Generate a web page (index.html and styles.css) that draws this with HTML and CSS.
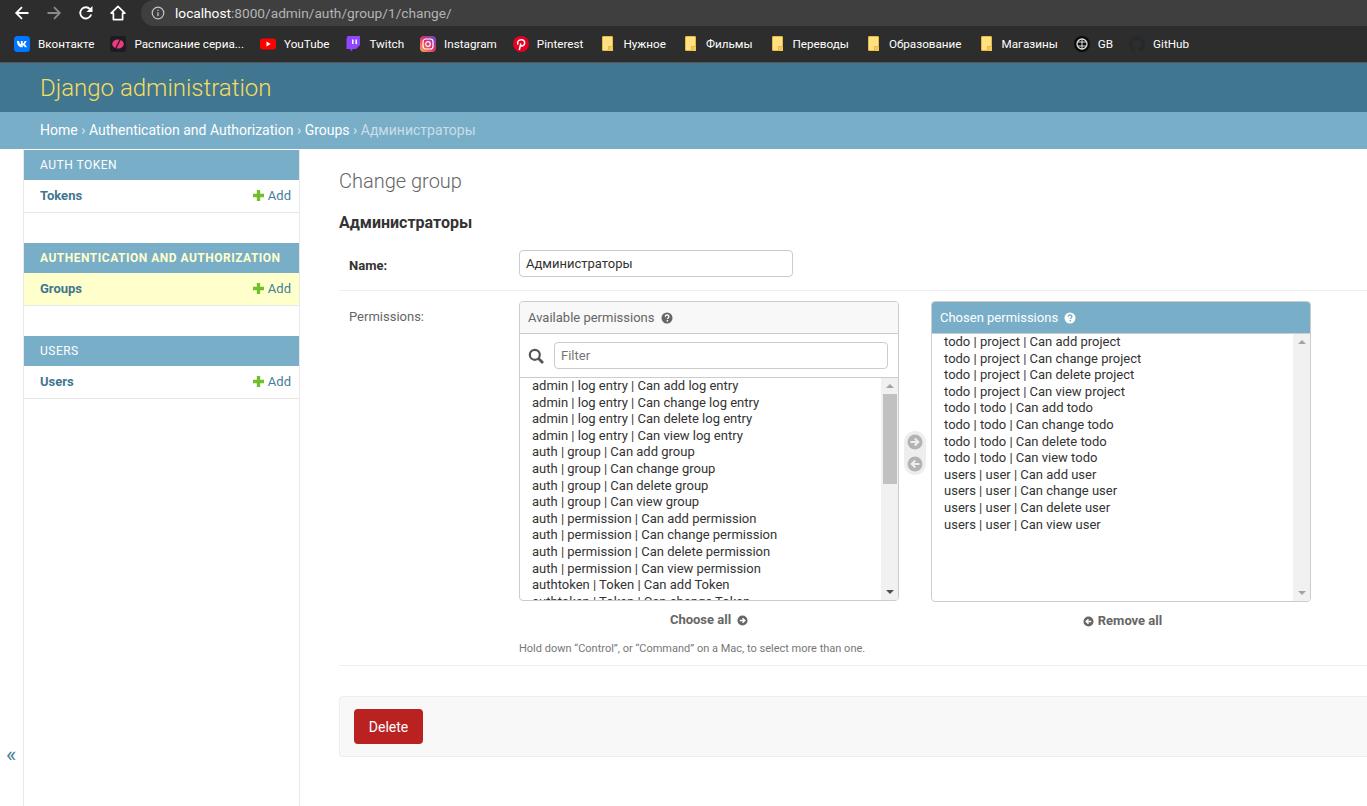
FILE: index.html
```html
<!DOCTYPE html>
<html lang="en">
<head>
    <meta charset="UTF-8">
    <title>Change group | Django site admin</title>
    <link rel="stylesheet" href="styles.css">
</head>
<body>
    <!-- browser chrome -->
    <div class="toolbar">
        <div class="nav-buttons">
            <svg class="nav-icon" viewBox="0 0 16 16"><path d="M14.5 8H2.5M8 2.2 2.2 8 8 13.8" fill="none" stroke="#fff" stroke-width="1.8"/></svg>
            <svg class="nav-icon" viewBox="0 0 16 16"><path d="M1.5 8H13.5M8 2.2 13.8 8 8 13.8" fill="none" stroke="#8a8a8a" stroke-width="1.8"/></svg>
            <svg class="nav-icon" viewBox="0 0 16 16"><path d="M13.2 9.5A5.6 5.6 0 1 1 12 4.1" fill="none" stroke="#fff" stroke-width="1.8"/><path d="M14.5 1v6h-6z" fill="#fff"/></svg>
            <svg class="nav-icon" viewBox="0 0 16 16"><path d="M8 1.4 1.2 8.2H3.4V14.6H12.6V8.2H14.8Z" fill="none" stroke="#fff" stroke-width="1.7" stroke-linejoin="round"/></svg>
        </div>
        <div class="address-bar">
            <svg class="info-icon" viewBox="0 0 16 16"><circle cx="8" cy="8" r="6.6" fill="none" stroke="#c4c4c4" stroke-width="1.4"/><path d="M8 7v4.5M8 4.2v1.6" stroke="#c4c4c4" stroke-width="1.5"/></svg>
            <span class="url"><span class="url-host">localhost</span>:8000/admin/auth/group/1/change/</span>
        </div>
    </div>
    <div class="bookmarks">
        <a class="bookmark">
            <svg class="bm-icon" viewBox="0 0 16 16"><rect width="16" height="16" rx="3.5" fill="#0077ff"/><path d="M3 5h2c.2 2 1 3 1.8 3.2V5h1.9v2.6c.8-.1 1.6-1 1.9-2.6h1.9c-.3 1.6-1.2 2.8-2 3.3.8.5 1.9 1.3 2.4 3h-2c-.4-1.1-1.2-1.9-2.2-2v2H8C5 11.300 3.200 9 3 5z" fill="#fff"/></svg>
            Вконтакте
        </a>
        <a class="bookmark">
            <svg class="bm-icon" viewBox="0 0 16 16"><rect width="16" height="16" rx="3" fill="#1c1c22"/><ellipse cx="8" cy="8" rx="5.800" ry="4.600" fill="#ec3a82"/><path d="M5.500 13 10.500 3" stroke="#1c1c22" stroke-width="1.300"/></svg>
            Расписание сериа...
        </a>
        <a class="bookmark">
            <svg class="bm-icon" viewBox="0 0 16 16"><rect y="2.500" width="16" height="11" rx="3" fill="#f00"/><path d="M6.500 5.600 10.700 8 6.500 10.400z" fill="#fff"/></svg>
            YouTube
        </a>
        <a class="bookmark">
            <svg class="bm-icon" viewBox="0 0 16 16"><path d="M2.500 0H15V9L11 13H8L5.500 15.500V13H1.500V3z" fill="#9146ff"/><path d="M7 3.500H8.500V8H7zM10.500 3.500H12V8H10.500z" fill="#fff"/></svg>
            Twitch
        </a>
        <a class="bookmark">
            <svg class="bm-icon" viewBox="0 0 16 16"><defs><linearGradient id="ig" x1="0" y1="1" x2="1" y2="0"><stop offset="0" stop-color="#fdb44b"/><stop offset=".5" stop-color="#e1306c"/><stop offset="1" stop-color="#5b51d8"/></linearGradient></defs><rect width="16" height="16" rx="4" fill="url(#ig)"/><rect x="3" y="3" width="10" height="10" rx="2.800" fill="none" stroke="#fff" stroke-width="1.200"/><circle cx="8" cy="8" r="2.300" fill="none" stroke="#fff" stroke-width="1.200"/></svg>
            Instagram
        </a>
        <a class="bookmark">
            <svg class="bm-icon" viewBox="0 0 16 16"><circle cx="8" cy="8" r="8" fill="#e60023"/><path d="M6.300 14 7.800 7.500M5 8.600C3.800 6 5.500 3.700 8.200 3.700c2.500 0 3.800 1.700 3.400 3.800-.4 2-2.800 3.300-4.300 1.700" fill="none" stroke="#fff" stroke-width="1.500"/></svg>
            Pinterest
        </a>
        <a class="bookmark"><span class="folder"></span>Нужное</a>
        <a class="bookmark"><span class="folder"></span>Фильмы</a>
        <a class="bookmark"><span class="folder"></span>Переводы</a>
        <a class="bookmark"><span class="folder"></span>Образование</a>
        <a class="bookmark"><span class="folder"></span>Магазины</a>
        <a class="bookmark">
            <svg class="bm-icon" viewBox="0 0 16 16"><circle cx="8" cy="8" r="8" fill="#0b0b0b"/><circle cx="8" cy="8" r="5" fill="none" stroke="#ddd" stroke-width="1.300"/><path d="M8 3v10M3.500 6h9M3.500 10h9" stroke="#ddd" stroke-width="1"/></svg>
            GB
        </a>
        <a class="bookmark">
            <svg class="bm-icon" viewBox="0 0 16 16"><path d="M8 0a8 8 0 0 0-2.500 15.600c.4.100.5-.2.500-.4v-1.400c-2.200.5-2.700-1-2.700-1-.4-.9-.9-1.200-.9-1.200-.7-.5.100-.5.100-.5.800.1 1.200.8 1.200.8.700 1.200 1.900.9 2.300.7.100-.5.300-.9.500-1.100-1.800-.2-3.700-.9-3.700-4 0-.9.300-1.600.8-2.100-.1-.2-.4-1 .1-2.100 0 0 .7-.2 2.200.8a7.600 7.600 0 0 1 4 0c1.500-1 2.200-.8 2.200-.8.400 1.100.2 1.900.1 2.100.5.600.8 1.300.8 2.100 0 3.100-1.900 3.800-3.700 4 .3.300.6.800.6 1.500v2.200c0 .2.100.5.600.4A8 8 0 0 0 8 0z" fill="#24292e"/></svg>
            GitHub
        </a>
    </div>

    <!-- django admin -->
    <header class="site-header">
        <h1 class="site-name">Django administration</h1>
    </header>
    <nav class="breadcrumbs">
        <a>Home</a> <span class="crumb-sep">›</span> <a>Authentication and Authorization</a> <span class="crumb-sep">›</span> <a>Groups</a> <span class="crumb-sep">›</span> Администраторы
    </nav>

    <div class="main">
        <div class="nav-toggle"><span class="toggle-mark">«</span></div>
        <aside class="sidebar">
            <section class="app-module">
                <div class="app-caption">Auth Token</div>
                <div class="app-row">
                    <a class="model-link">Tokens</a>
                    <a class="add-link"><svg class="plus-icon" viewBox="0 0 10 10"><path d="M3.500 0h3v3.500H10v3H6.500V10h-3V6.500H0v-3h3.500z"/></svg>Add</a>
                </div>
            </section>
            <section class="app-module current">
                <div class="app-caption">Authentication and Authorization</div>
                <div class="app-row">
                    <a class="model-link">Groups</a>
                    <a class="add-link"><svg class="plus-icon" viewBox="0 0 10 10"><path d="M3.500 0h3v3.500H10v3H6.500V10h-3V6.500H0v-3h3.500z"/></svg>Add</a>
                </div>
            </section>
            <section class="app-module">
                <div class="app-caption">Users</div>
                <div class="app-row">
                    <a class="model-link">Users</a>
                    <a class="add-link"><svg class="plus-icon" viewBox="0 0 10 10"><path d="M3.500 0h3v3.500H10v3H6.500V10h-3V6.500H0v-3h3.500z"/></svg>Add</a>
                </div>
            </section>
        </aside>

        <main class="content">
            <h2 class="page-title">Change group</h2>
            <h3 class="object-title">Администраторы</h3>

            <div class="form-row name-row">
                <label class="field-label required">Name:</label>
                <input class="text-input" type="text" value="Администраторы">
            </div>

            <div class="form-row permissions-row">
                <label class="field-label">Permissions:</label>
                <div class="field-body">
                    <div class="selector">
                        <div class="selector-col">
                            <div class="selector-box">
                                <div class="selector-title">
                                    Available permissions
                                    <svg class="help-icon" viewBox="0 0 12 12"><circle cx="6" cy="6" r="5.500" fill="#666"/><path d="M4.200 4.700C4.300 3.600 5 3 6 3s1.900.6 1.900 1.600c0 1.300-1.500 1.300-1.500 2.400" fill="none" stroke="#fff" stroke-width="1.300"/><path d="M5.600 8h1.500v1.400H5.600z" fill="#fff"/></svg>
                                </div>
                                <div class="selector-filter">
                                    <svg class="search-icon" viewBox="0 0 16 16"><circle cx="6.800" cy="6.800" r="5" fill="none" stroke="#555" stroke-width="2.200"/><path d="M10.500 10.500 15 15" stroke="#555" stroke-width="2.800"/></svg>
                                    <input class="filter-input" type="text" placeholder="Filter">
                                </div>
                                <div class="option-list available-list">
                                    <div class="options">
                                        <div>admin | log entry | Can add log entry</div>
                                        <div>admin | log entry | Can change log entry</div>
                                        <div>admin | log entry | Can delete log entry</div>
                                        <div>admin | log entry | Can view log entry</div>
                                        <div>auth | group | Can add group</div>
                                        <div>auth | group | Can change group</div>
                                        <div>auth | group | Can delete group</div>
                                        <div>auth | group | Can view group</div>
                                        <div>auth | permission | Can add permission</div>
                                        <div>auth | permission | Can change permission</div>
                                        <div>auth | permission | Can delete permission</div>
                                        <div>auth | permission | Can view permission</div>
                                        <div>authtoken | Token | Can add Token</div>
                                        <div>authtoken | Token | Can change Token</div>
                                    </div>
                                    <div class="scrollbar">
                                        <span class="scroll-up"></span>
                                        <span class="scroll-thumb"></span>
                                        <span class="scroll-down"></span>
                                    </div>
                                </div>
                            </div>
                            <div class="selector-action">
                                Choose all
                                <svg class="action-icon" viewBox="0 0 12 12"><circle cx="6" cy="6" r="5.500" fill="#666"/><path d="M3 6h5M6 3.500 8.500 6 6 8.500" fill="none" stroke="#fff" stroke-width="1.600"/></svg>
                            </div>
                        </div>

                        <div class="chooser">
                            <svg class="chooser-icon" viewBox="0 0 16 16"><circle cx="8" cy="8" r="7.500" fill="#b3b3b3"/><path d="M3.500 8h7.500M7.800 4.500 11.300 8 7.800 11.500" fill="none" stroke="#eee" stroke-width="2"/></svg>
                            <svg class="chooser-icon" viewBox="0 0 16 16"><circle cx="8" cy="8" r="7.500" fill="#b3b3b3"/><path d="M12.500 8H5M8.200 4.500 4.700 8 8.200 11.500" fill="none" stroke="#eee" stroke-width="2"/></svg>
                        </div>

                        <div class="selector-col">
                            <div class="selector-box chosen-box">
                                <div class="selector-title chosen-title">
                                    Chosen permissions
                                    <svg class="help-icon" viewBox="0 0 12 12"><circle cx="6" cy="6" r="5.500" fill="#fff"/><path d="M4.200 4.700C4.300 3.600 5 3 6 3s1.900.6 1.900 1.600c0 1.300-1.500 1.300-1.500 2.400" fill="none" stroke="#79aec8" stroke-width="1.300"/><path d="M5.600 8h1.500v1.400H5.600z" fill="#79aec8"/></svg>
                                </div>
                                <div class="option-list chosen-list">
                                    <div class="options">
                                        <div>todo | project | Can add project</div>
                                        <div>todo | project | Can change project</div>
                                        <div>todo | project | Can delete project</div>
                                        <div>todo | project | Can view project</div>
                                        <div>todo | todo | Can add todo</div>
                                        <div>todo | todo | Can change todo</div>
                                        <div>todo | todo | Can delete todo</div>
                                        <div>todo | todo | Can view todo</div>
                                        <div>users | user | Can add user</div>
                                        <div>users | user | Can change user</div>
                                        <div>users | user | Can delete user</div>
                                        <div>users | user | Can view user</div>
                                    </div>
                                    <div class="scrollbar">
                                        <span class="scroll-up"></span>
                                        <span class="scroll-track"></span>
                                        <span class="scroll-down"></span>
                                    </div>
                                </div>
                            </div>
                            <div class="selector-action remove-action">
                                <svg class="action-icon" viewBox="0 0 12 12"><circle cx="6" cy="6" r="5.500" fill="#666"/><path d="M9 6H4M6 3.500 3.500 6 6 8.500" fill="none" stroke="#fff" stroke-width="1.600"/></svg>
                                Remove all
                            </div>
                        </div>
                    </div>
                    <p class="help-text">Hold down “Control”, or “Command” on a Mac, to select more than one.</p>
                </div>
            </div>

            <div class="submit-row">
                <a class="delete-btn">Delete</a>
            </div>
        </main>
    </div>
</body>
</html>
```

FILE: styles.css
```css
:root {
    --primary: #79aec8;
    --secondary: #417690;
    --accent: #f5dd5d;
    --body-fg: #333;
    --quiet: #666;
    --hairline: #e8e8e8;
    --border: #ccc;
}

* {
    box-sizing: border-box;
}

html, body {
    height: 100%;
}

body {
    margin: 0;
    overflow: hidden;
    display: flex;
    flex-direction: column;
    font-family: Roboto, "Liberation Sans", sans-serif;
    font-size: 13px;
    color: var(--body-fg);
    background: #fff;
}

/* browser chrome */
.toolbar {
    height: 26px;
    flex: none;
    display: flex;
    background: #2d2d2d;
}

.nav-buttons {
    width: 141px;
    display: flex;
    align-items: center;
    gap: 16px;
    padding-left: 14px;
}

.nav-icon {
    width: 16px;
    height: 16px;
}

.address-bar {
    flex: 1;
    display: flex;
    align-items: center;
    gap: 10px;
    padding-left: 10px;
    background: #3f3f3f;
    border-radius: 13px 0 0 13px;
}

.info-icon {
    width: 14px;
    height: 14px;
}

.url {
    font-size: 13.7px;
    color: #b4b4b4;
}

.url-host {
    color: #fff;
}

.bookmarks {
    height: 37px;
    flex: none;
    display: flex;
    align-items: center;
    gap: 16px;
    padding: 0 0 1px 14px;
    background: #2d2d2d;
    border-bottom: 1px solid #555;
    font-size: 11.7px;
    color: #fff;
}

.bookmark {
    display: flex;
    align-items: center;
    gap: 8px;
    white-space: nowrap;
}

.bm-icon {
    width: 16px;
    height: 16px;
    flex: none;
}

.folder {
    position: relative;
    width: 11px;
    height: 15px;
    margin: 0 2px 0 3px;
    background: #ffe082;
    border: 1px solid #e8b93c;
    border-radius: 1px;
}

.folder::after {
    content: "";
    position: absolute;
    right: -1px;
    bottom: -1px;
    width: 4px;
    height: 4px;
    border-left: 1px solid #e8b93c;
    border-top: 1px solid #e8b93c;
    background: #f4c95a;
}

/* django header */
.site-header {
    height: 49px;
    flex: none;
    display: flex;
    align-items: center;
    padding-left: 40px;
    background: var(--secondary);
}

.site-name {
    margin: 0;
    font-size: 24px;
    font-weight: 300;
    color: var(--accent);
}

.breadcrumbs {
    height: 37px;
    flex: none;
    display: flex;
    align-items: center;
    gap: 3.5px;
    padding: 0 0 2px 40px;
    background: var(--primary);
    font-size: 14px;
    color: rgba(255, 255, 255, 0.6);
}

.breadcrumbs a {
    color: #fff;
}

.crumb-sep {
    color: rgba(255, 255, 255, 0.7);
}

.main {
    flex: 1;
    display: flex;
    min-height: 0;
}

.nav-toggle {
    width: 24px;
    flex: none;
    display: flex;
    flex-direction: column;
    justify-content: flex-end;
    padding: 0 0 39px 6px;
    border-right: 1px solid var(--hairline);
}

.toggle-mark {
    font-size: 22px;
    line-height: 24px;
    color: #447e9b;
}

.sidebar {
    width: 276px;
    flex: none;
    padding-top: 1px;
    border-right: 1px solid var(--hairline);
}

.app-module {
    margin-bottom: 30px;
}

.app-caption {
    height: 30px;
    padding-left: 16px;
    line-height: 30px;
    background: var(--primary);
    color: #fff;
    font-size: 12px;
    letter-spacing: 0.5px;
    text-transform: uppercase;
    white-space: nowrap;
}

.app-row {
    height: 33px;
    display: flex;
    align-items: center;
    justify-content: space-between;
    padding: 0 8px 2px 16px;
    border-bottom: 1px solid var(--hairline);
}

.current .app-caption {
    color: #ffc;
    font-weight: 700;
}

.current .app-row {
    background: #ffc;
}

.model-link {
    font-weight: 700;
    color: var(--secondary);
}

.add-link {
    display: flex;
    align-items: center;
    gap: 4px;
    color: #447e9b;
}

.plus-icon {
    width: 11px;
    height: 11px;
    fill: #70bf2b;
}

/* form */
.content {
    flex: 1;
    min-width: 0;
    padding: 20px 0 0 39px;
}

.page-title {
    margin: 0;
    font-size: 20px;
    line-height: 24px;
    font-weight: 300;
    color: var(--quiet);
}

.object-title {
    margin: 20px 0 0;
    font-size: 16px;
    line-height: 20px;
    font-weight: 700;
}

.form-row {
    display: flex;
    padding: 10px;
    border-bottom: 1px solid #eee;
}

.name-row {
    margin-top: 7px;
    height: 51px;
    padding: 10px 10px 0;
}

.field-label {
    width: 170px;
    flex: none;
    padding-top: 8px;
    color: var(--quiet);
}

.required {
    font-weight: 700;
    color: var(--body-fg);
}

.text-input {
    width: 274px;
    height: 27px;
    padding: 0 6px;
    border: 1px solid var(--border);
    border-radius: 4px;
    font: 13px Roboto, sans-serif;
    color: var(--body-fg);
}

.permissions-row {
    height: 375px;
    padding-right: 0;
}

.selector {
    display: flex;
    width: 792px;
}

.selector-col {
    width: 380px;
}

.selector-box {
    height: 300px;
    display: flex;
    flex-direction: column;
    border: 1px solid var(--border);
    border-radius: 4px;
    overflow: hidden;
}

.chosen-box {
    height: 301px;
}

.selector-title {
    height: 32px;
    flex: none;
    display: flex;
    align-items: center;
    gap: 7px;
    padding-left: 8px;
    background: #f8f8f8;
    border-bottom: 1px solid var(--border);
    color: var(--quiet);
}

.chosen-title {
    gap: 6px;
    background: var(--primary);
    color: #fff;
}

.help-icon {
    width: 12px;
    height: 12px;
}

.selector-filter {
    height: 44px;
    flex: none;
    display: flex;
    align-items: center;
    gap: 10px;
    padding: 0 10px 0 8px;
    border-bottom: 1px solid var(--border);
}

.search-icon {
    width: 16px;
    height: 16px;
}

.filter-input {
    flex: 1;
    min-width: 0;
    height: 27px;
    padding: 0 6px;
    border: 1px solid var(--border);
    border-radius: 4px;
    font: 13px Roboto, sans-serif;
}

.filter-input::placeholder {
    color: #757575;
}

.option-list {
    flex: 1;
    min-height: 0;
    display: flex;
}

.options {
    flex: 1;
    overflow: hidden;
    padding-left: 12px;
    line-height: 16.6px;
}

.scrollbar {
    width: 17px;
    flex: none;
    display: flex;
    flex-direction: column;
    align-items: center;
    background: #f1f1f1;
}

.scroll-up, .scroll-down {
    flex: none;
    width: 0;
    height: 0;
    border-left: 4px solid transparent;
    border-right: 4px solid transparent;
}

.scroll-up {
    margin: 6px 0;
    border-bottom: 4px solid #a3a3a3;
}

.scroll-down {
    margin: auto 0 6px;
    border-top: 4px solid #505050;
}

.chosen-list .scroll-down {
    border-top-color: #a3a3a3;
}

.scroll-thumb {
    width: 14px;
    height: 90px;
    background: #c1c1c1;
}

.chooser {
    width: 22px;
    height: 44px;
    flex: none;
    align-self: flex-start;
    display: flex;
    flex-direction: column;
    align-items: center;
    justify-content: center;
    gap: 6px;
    margin: 130px 5px 0;
    background: #eee;
    border-radius: 11px;
}

.chooser-icon {
    width: 16px;
    height: 16px;
}

.selector-action {
    display: flex;
    align-items: center;
    justify-content: center;
    gap: 6px;
    margin-top: 11px;
    line-height: 16px;
    font-weight: 700;
    color: var(--quiet);
}

.remove-action {
    gap: 4px;
    padding-left: 3px;
}

.action-icon {
    width: 11px;
    height: 11px;
    margin-top: 1px;
}

.help-text {
    margin: 13px 0 0;
    font-size: 11px;
    line-height: 14px;
    color: #777;
}

.submit-row {
    height: 61px;
    margin-top: 30px;
    display: flex;
    align-items: center;
    padding-left: 14px;
    background: #f8f8f8;
    border: 1px solid #eee;
    border-right: 0;
    border-radius: 4px 0 0 4px;
}

.delete-btn {
    width: 69px;
    height: 35px;
    display: flex;
    align-items: center;
    justify-content: center;
    background: #ba2121;
    border-radius: 4px;
    color: #fff;
    font-size: 14px;
}
```
